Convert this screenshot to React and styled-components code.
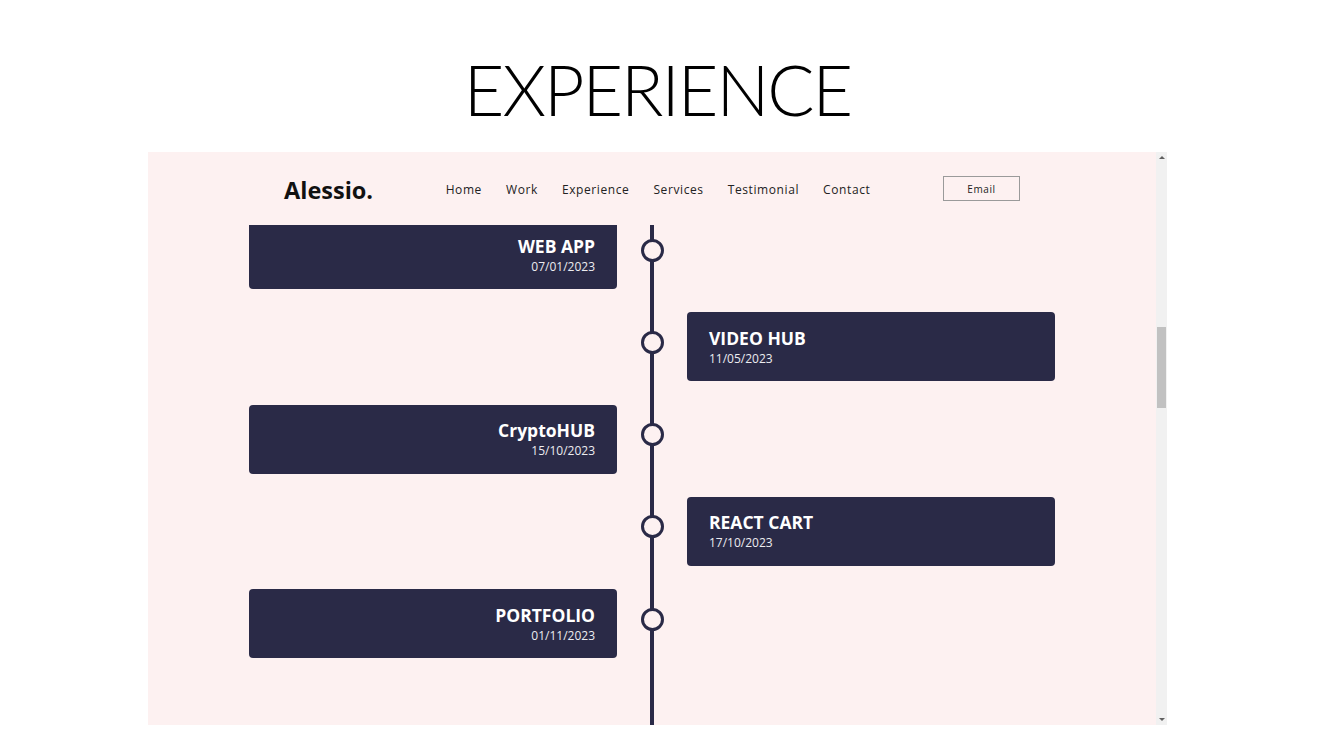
import React from "react";
import styled, { createGlobalStyle } from "styled-components";

const GlobalStyle = createGlobalStyle`
  html, body {
    margin: 0;
    padding: 0;
    background: #ffffff;
  }
  * { box-sizing: border-box; }
`;

const NAVY = "#2a2a47";
const PINK = "#fdf1f1";

const Slide = styled.div`
  width: 1336px;
  height: 752px;
  padding-right: 21px;
  background: #ffffff;
  display: flex;
  flex-direction: column;
  align-items: center;
  overflow: hidden;
`;

const Title = styled.h1`
  margin: 0;
  height: 152px;
  padding-top: 47px;
  font-family: Lato, "DejaVu Sans", sans-serif;
  font-weight: 300;
  font-size: 70px;
  line-height: 84px;
  letter-spacing: -2px;
  color: #000;
`;

const Frame = styled.div`
  width: 1019px;
  height: 573px;
  display: flex;
  background: ${PINK};
`;

const Site = styled.div`
  flex: 1;
  display: flex;
  flex-direction: column;
  font-family: "Open Sans", sans-serif;
`;

const Nav = styled.nav`
  height: 73px;
  flex-shrink: 0;
  display: flex;
  align-items: center;
  justify-content: space-between;
  padding: 0 136px;
`;

const Logo = styled.div`
  font-size: 23.5px;
  font-weight: 700;
  color: #111;
  padding-top: 2px;
`;

const Links = styled.ul`
  display: flex;
  gap: 24px;
  margin: 0;
  padding: 2px 0 0;
  list-style: none;
`;

const Link = styled.li`
  font-size: 12px;
  letter-spacing: 0.6px;
  color: #222;
`;

const EmailButton = styled.button`
  width: 77px;
  height: 25px;
  background: transparent;
  border: 1px solid #9a9a9a;
  font-family: "Open Sans", sans-serif;
  font-size: 10px;
  letter-spacing: 0.6px;
  color: #222;
  padding: 0;
`;

const Timeline = styled.div`
  flex: 1;
  overflow: hidden;
  background: linear-gradient(${NAVY}, ${NAVY}) center / 4px 100% no-repeat;
`;

const Rows = styled.div`
  margin-top: -5px;
  display: grid;
  grid-template-columns: 368px 70px 368px;
  grid-auto-rows: 69px;
  row-gap: 23.25px;
  justify-content: center;
`;

const Card = styled.div`
  grid-column: ${(p) => (p.$side === "left" ? 1 : 3)};
  background: ${NAVY};
  border-radius: 4px;
  padding: 13.5px 22px 0;
  text-align: ${(p) => (p.$side === "left" ? "right" : "left")};
  color: #fff;
`;

const CardTitle = styled.div`
  font-size: 17.5px;
  font-weight: 700;
  line-height: 24px;
`;

const CardDate = styled.div`
  margin-top: 1px;
  font-size: 12px;
  line-height: 16px;
  color: #ececf0;
`;

const NodeCell = styled.div`
  grid-column: 2;
  display: flex;
  justify-content: center;
  align-items: flex-start;
`;

const Node = styled.div`
  margin-top: 18.5px;
  width: 23px;
  height: 23px;
  border-radius: 50%;
  border: 3px solid ${NAVY};
  background: ${PINK};
`;

const Scrollbar = styled.div`
  width: 11px;
  background: #f1f1f1;
  display: flex;
  flex-direction: column;
  align-items: center;
  padding: 4px 0;
`;

const Arrow = styled.div`
  width: 0;
  height: 0;
  border-left: 3px solid transparent;
  border-right: 3px solid transparent;
  ${(p) =>
    p.$dir === "up"
      ? `border-bottom: 3px solid #606060;`
      : `border-top: 3px solid #606060; margin-top: auto;`}
`;

const Thumb = styled.div`
  width: 9px;
  height: 81px;
  background: #c1c1c1;
  margin-top: 168px;
`;

const items = [
  { title: "WEB APP", date: "07/01/2023" },
  { title: "VIDEO HUB", date: "11/05/2023" },
  { title: "CryptoHUB", date: "15/10/2023" },
  { title: "REACT CART", date: "17/10/2023" },
  { title: "PORTFOLIO", date: "01/11/2023" },
];

export default function App() {
  return (
    <>
      <GlobalStyle />
      <Slide>
        <Title>EXPERIENCE</Title>
        <Frame>
          <Site>
            <Nav>
              <Logo>Alessio.</Logo>
              <Links>
                {["Home", "Work", "Experience", "Services", "Testimonial", "Contact"].map((l) => (
                  <Link key={l}>{l}</Link>
                ))}
              </Links>
              <EmailButton>Email</EmailButton>
            </Nav>
            <Timeline>
              <Rows>
                {items.map((it, i) => {
                  const side = i % 2 === 0 ? "left" : "right";
                  return (
                    <React.Fragment key={it.title}>
                      <Card $side={side} style={{ gridRow: i + 1 }}>
                        <CardTitle>{it.title}</CardTitle>
                        <CardDate>{it.date}</CardDate>
                      </Card>
                      <NodeCell style={{ gridRow: i + 1 }}>
                        <Node />
                      </NodeCell>
                    </React.Fragment>
                  );
                })}
              </Rows>
            </Timeline>
          </Site>
          <Scrollbar>
            <Arrow $dir="up" />
            <Thumb />
            <Arrow $dir="down" />
          </Scrollbar>
        </Frame>
      </Slide>
    </>
  );
}
